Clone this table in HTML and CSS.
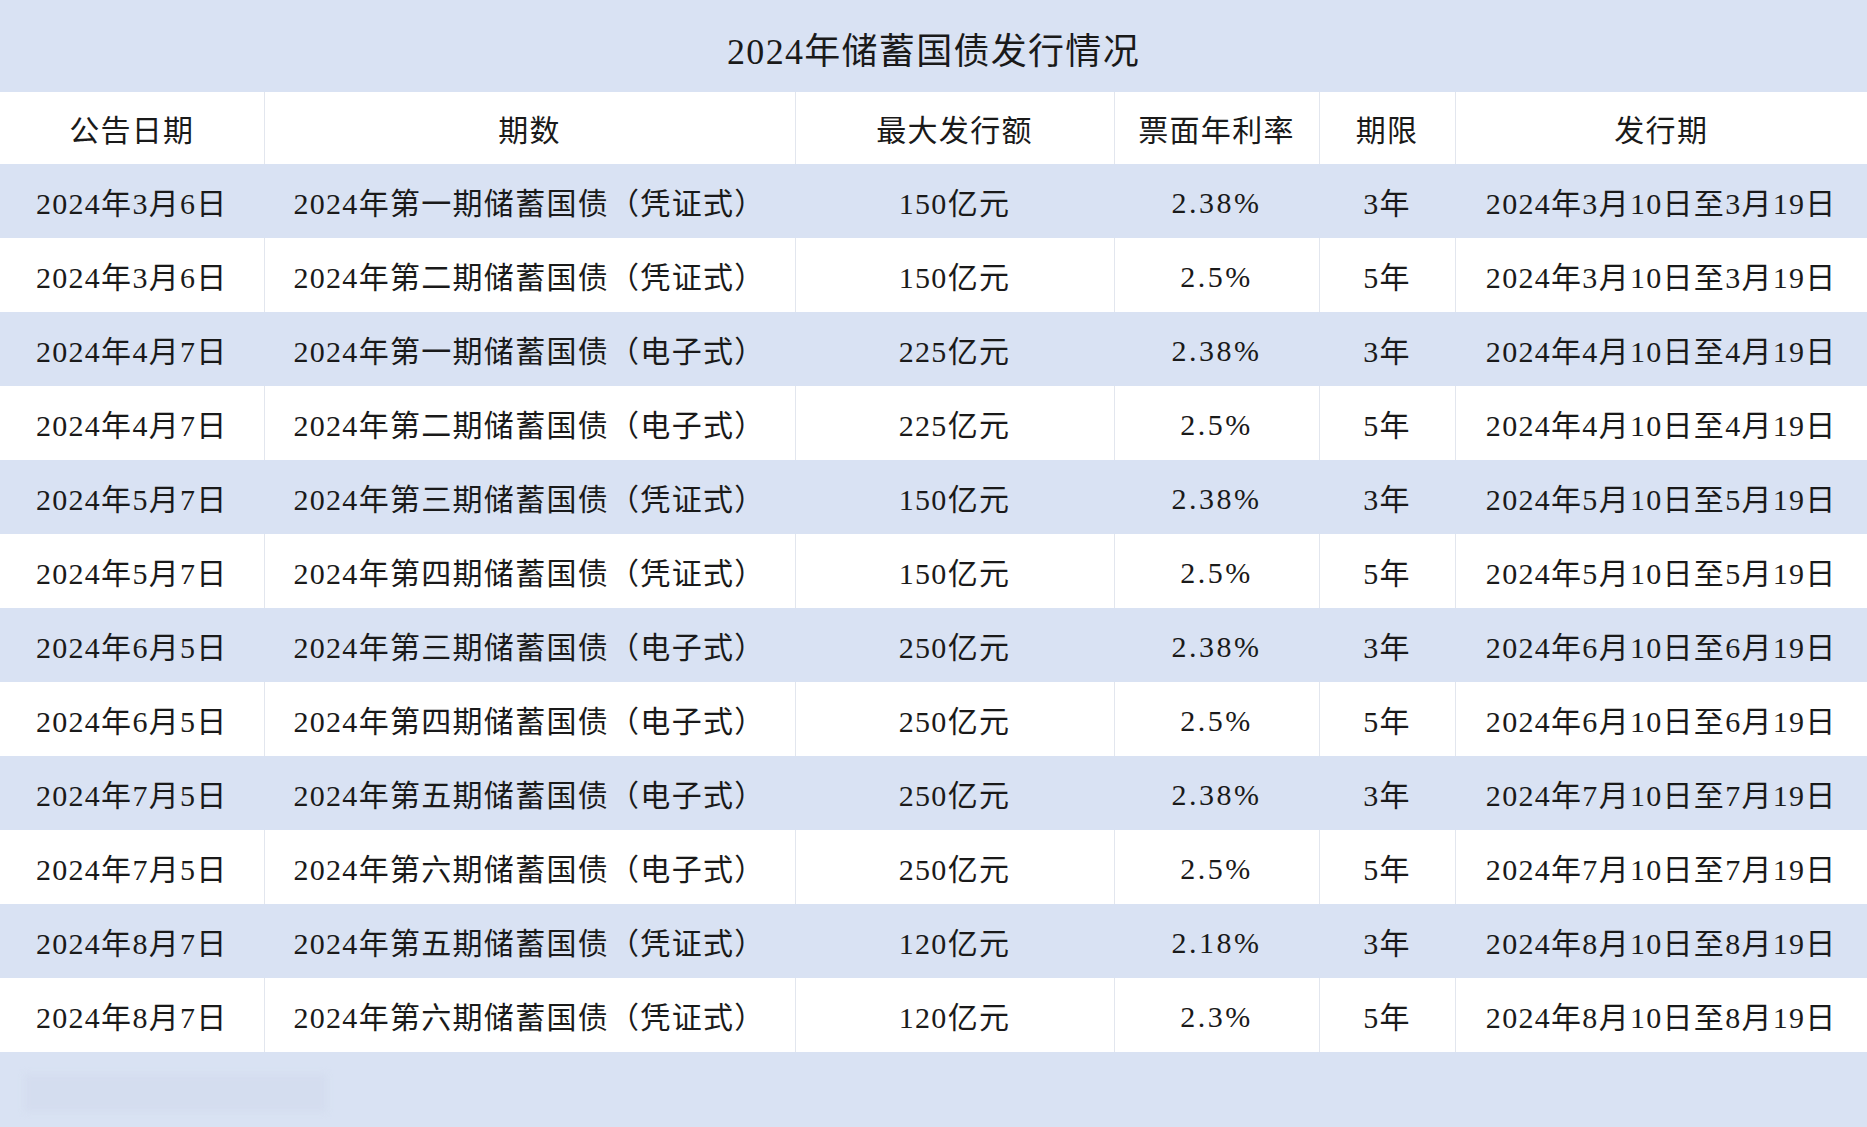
FILE: index.html
```html
<!DOCTYPE html>
<html lang="zh-CN">
<head>
<meta charset="utf-8">
<title>2024年储蓄国债发行情况</title>
<link rel="stylesheet" href="styles.css">
</head>
<body>
<div class="sheet">
  <div class="title">2024年储蓄国债发行情况</div>
  <table class="grid">
    <colgroup>
      <col class="c1"><col class="c2"><col class="c3"><col class="c4"><col class="c5"><col class="c6">
    </colgroup>
    <thead>
      <tr class="head"><th>公告日期</th><th>期数</th><th>最大发行额</th><th>票面年利率</th><th>期限</th><th>发行期</th></tr>
    </thead>
    <tbody>
      <tr class="blue"><td>2024年3月6日</td><td>2024年第一期储蓄国债（凭证式）</td><td>150亿元</td><td class="pct">2.38%</td><td>3年</td><td>2024年3月10日至3月19日</td></tr>
      <tr class="white"><td>2024年3月6日</td><td>2024年第二期储蓄国债（凭证式）</td><td>150亿元</td><td class="pct">2.5%</td><td>5年</td><td>2024年3月10日至3月19日</td></tr>
      <tr class="blue"><td>2024年4月7日</td><td>2024年第一期储蓄国债（电子式）</td><td>225亿元</td><td class="pct">2.38%</td><td>3年</td><td>2024年4月10日至4月19日</td></tr>
      <tr class="white"><td>2024年4月7日</td><td>2024年第二期储蓄国债（电子式）</td><td>225亿元</td><td class="pct">2.5%</td><td>5年</td><td>2024年4月10日至4月19日</td></tr>
      <tr class="blue"><td>2024年5月7日</td><td>2024年第三期储蓄国债（凭证式）</td><td>150亿元</td><td class="pct">2.38%</td><td>3年</td><td>2024年5月10日至5月19日</td></tr>
      <tr class="white"><td>2024年5月7日</td><td>2024年第四期储蓄国债（凭证式）</td><td>150亿元</td><td class="pct">2.5%</td><td>5年</td><td>2024年5月10日至5月19日</td></tr>
      <tr class="blue"><td>2024年6月5日</td><td>2024年第三期储蓄国债（电子式）</td><td>250亿元</td><td class="pct">2.38%</td><td>3年</td><td>2024年6月10日至6月19日</td></tr>
      <tr class="white"><td>2024年6月5日</td><td>2024年第四期储蓄国债（电子式）</td><td>250亿元</td><td class="pct">2.5%</td><td>5年</td><td>2024年6月10日至6月19日</td></tr>
      <tr class="blue"><td>2024年7月5日</td><td>2024年第五期储蓄国债（电子式）</td><td>250亿元</td><td class="pct">2.38%</td><td>3年</td><td>2024年7月10日至7月19日</td></tr>
      <tr class="white"><td>2024年7月5日</td><td>2024年第六期储蓄国债（电子式）</td><td>250亿元</td><td class="pct">2.5%</td><td>5年</td><td>2024年7月10日至7月19日</td></tr>
      <tr class="blue"><td>2024年8月7日</td><td>2024年第五期储蓄国债（凭证式）</td><td>120亿元</td><td class="pct">2.18%</td><td>3年</td><td>2024年8月10日至8月19日</td></tr>
      <tr class="white"><td>2024年8月7日</td><td>2024年第六期储蓄国债（凭证式）</td><td>120亿元</td><td class="pct">2.3%</td><td>5年</td><td>2024年8月10日至8月19日</td></tr>
    </tbody>
  </table>
  <div class="footer"><div class="smudge"></div></div>
</div>
</body>
</html>
```

FILE: styles.css
```css
html, body {
  margin: 0;
  padding: 0;
  background: #d9e2f3;
}

.sheet {
  width: 1867px;
  height: 1127px;
  display: flex;
  flex-direction: column;
  font-family: "Liberation Serif", "Noto Sans CJK SC", serif;
  color: #1a1a1a;
  overflow: hidden;
}

.title {
  flex: 0 0 92px;
  height: 92px;
  display: flex;
  align-items: center;
  justify-content: center;
  background: #d9e2f3;
  font-size: 36px;
  letter-spacing: 1.3px;
  padding-top: 4px;
  box-sizing: border-box;
}

.grid {
  flex: 0 0 auto;
  width: 1867px;
  border-collapse: collapse;
  table-layout: fixed;
}

.c1 { width: 264px; }
.c2 { width: 531px; }
.c3 { width: 319px; }
.c4 { width: 205px; }
.c5 { width: 136px; }
.c6 { width: 412px; }

.grid th,
.grid td {
  box-sizing: border-box;
  padding: 0;
  text-align: center;
  vertical-align: middle;
  font-weight: normal;
  font-size: 30px;
  letter-spacing: 1.3px;
  white-space: nowrap;
  border-left: 1px solid #e2e6ee;
}

.grid th:first-child,
.grid td:first-child {
  border-left: none;
}

.head th {
  height: 72px;
  background: #ffffff;
}

.grid tbody td {
  height: 74px;
}

.grid tbody td.pct {
  padding-top: 4px;
  letter-spacing: 2.5px;
}

.blue td {
  background: #d9e2f3;
  border-left-color: #d9e2f3;
}

.white td {
  background: #ffffff;
}

.footer {
  flex: 1;
  background: #d9e2f3;
  padding: 22px 0 0 24px;
  box-sizing: border-box;
}

.smudge {
  width: 303px;
  height: 38px;
  background: #d4ddef;
  filter: blur(3px);
}
```
